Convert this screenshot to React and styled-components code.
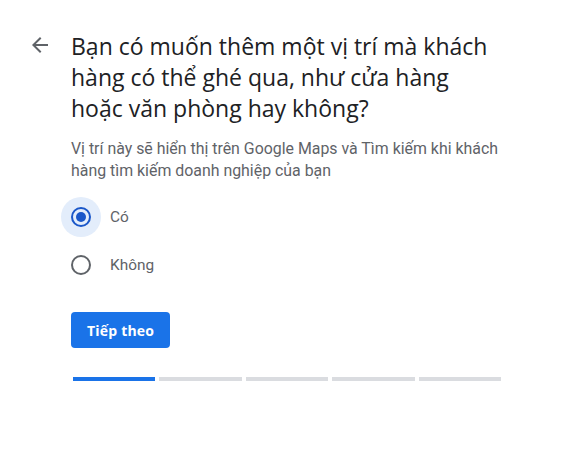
import React, { useState } from 'react'
import styled, { createGlobalStyle } from 'styled-components'

const GlobalStyle = createGlobalStyle`
  body {
    margin: 0;
    background: #fff;
    font-family: Roboto, "Liberation Sans", sans-serif;
  }
`

const Page = styled.div`
  display: flex;
  align-items: flex-start;
  padding: 31px 0 0 28px;
  gap: 19px;
`

const BackButton = styled.button`
  border: 0;
  background: none;
  padding: 0;
  margin-top: 2px;
  width: 24px;
  height: 24px;
  display: flex;
  align-items: center;
  justify-content: center;
  color: #5f6368;
  cursor: pointer;
`

const Content = styled.div`
  width: 440px;
`

const Title = styled.h1`
  margin: 0;
  max-width: 425px;
  font-family: "Open Sans", sans-serif;
  font-weight: 400;
  font-size: 23px;
  line-height: 31px;
  color: #202124;
`

const Subtitle = styled.p`
  margin: 14px 0 0;
  font-size: 15.9px;
  line-height: 22px;
  color: #5f6368;
`

const Options = styled.div`
  display: flex;
  flex-direction: column;
  gap: 8px;
  margin-top: 15px;
  margin-left: -10px;
`

const Option = styled.label`
  display: flex;
  align-items: center;
  gap: 9px;
  cursor: pointer;
  font-size: 15.4px;
  color: #5f6368;
`

const RadioHalo = styled.span`
  width: 40px;
  height: 40px;
  border-radius: 50%;
  display: flex;
  align-items: center;
  justify-content: center;
  background: ${p => (p.$checked ? '#e3edfb' : 'transparent')};
`

const RadioRing = styled.span`
  box-sizing: border-box;
  width: 20px;
  height: 20px;
  border-radius: 50%;
  border: 2px solid ${p => (p.$checked ? '#1a57c9' : '#5f6368')};
  display: flex;
  align-items: center;
  justify-content: center;

  &::after {
    content: '';
    width: 10px;
    height: 10px;
    border-radius: 50%;
    background: ${p => (p.$checked ? '#1a57c9' : 'transparent')};
  }
`

const NextButton = styled.button`
  margin-top: 27px;
  height: 36px;
  padding: 0 16px;
  border: 0;
  border-radius: 4px;
  background: #1a73e8;
  color: #fff;
  font-family: "Open Sans", sans-serif;
  font-weight: 700;
  font-size: 14px;
  letter-spacing: 0.2px;
  cursor: pointer;
`

const Progress = styled.div`
  display: grid;
  grid-template-columns: repeat(5, 1fr);
  gap: 4px;
  width: 428px;
  margin-top: 29px;
  margin-left: 2px;
`

const Segment = styled.div`
  height: 4px;
  background: ${p => (p.$active ? '#1a73e8' : '#dadce0')};
`

const options = ['Có', 'Không']

export default function App() {
  const [choice, setChoice] = useState('Có')
  return (
    <>
      <GlobalStyle />
      <Page>
        <BackButton aria-label="Quay lại">
          <svg width="24" height="24" viewBox="0 0 24 24">
            <path
              fill="currentColor"
              d="M20 11H7.83l5.59-5.59L12 4l-8 8 8 8 1.41-1.41L7.83 13H20v-2z"
            />
          </svg>
        </BackButton>
        <Content>
          <Title>
            Bạn có muốn thêm một vị trí mà khách hàng có thể ghé qua, như cửa hàng hoặc văn phòng hay không?
          </Title>
          <Subtitle>
            Vị trí này sẽ hiển thị trên Google Maps và Tìm kiếm khi khách hàng tìm kiếm doanh nghiệp của bạn
          </Subtitle>
          <Options>
            {options.map(o => (
              <Option key={o} onClick={() => setChoice(o)}>
                <RadioHalo $checked={choice === o}>
                  <RadioRing $checked={choice === o} />
                </RadioHalo>
                {o}
              </Option>
            ))}
          </Options>
          <NextButton>Tiếp theo</NextButton>
          <Progress>
            {[0, 1, 2, 3, 4].map(i => (
              <Segment key={i} $active={i === 0} />
            ))}
          </Progress>
        </Content>
      </Page>
    </>
  )
}
